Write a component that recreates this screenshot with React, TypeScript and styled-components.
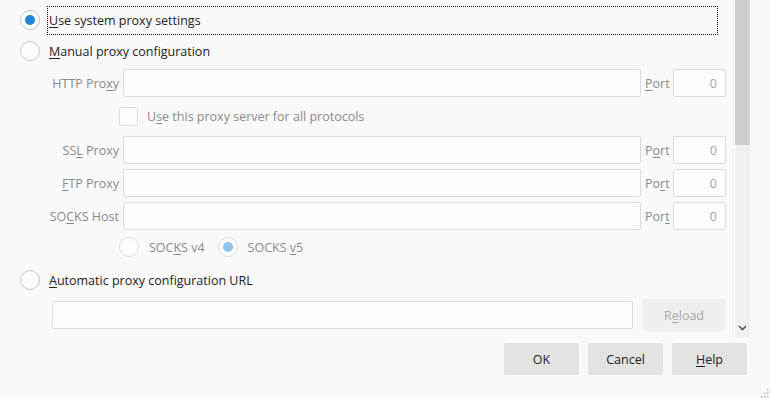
import { Fragment } from "react";
import styled, { createGlobalStyle } from "styled-components";

const GlobalStyle = createGlobalStyle`
  html, body {
    margin: 0;
    padding: 0;
    background: #f9f9f9;
  }
  body {
    font-family: "Open Sans", "Noto Sans", sans-serif;
    font-size: 12.5px;
    color: #222;
  }
`;

const Dialog = styled.div`
  width: 770px;
  height: 399px;
  display: flex;
  flex-direction: column;
  position: relative;
  overflow: hidden;
`;

const ScrollArea = styled.div`
  height: 337px;
  display: flex;
  padding-right: 20px;
`;

const Content = styled.div`
  flex: 1;
  display: flex;
  flex-direction: column;
  padding: 6px 6px 0 20px;
  border-right: 1px solid #f1f1f1;
  margin-right: 2px;
`;

const Scrollbar = styled.div`
  width: 15px;
  display: flex;
  flex-direction: column;
  background: #f0f0f0;
`;

const Thumb = styled.div`
  height: 145px;
  background: #cdcdcd;
  border-right: 2px solid #d6d6d6;
`;

const Track = styled.div`
  flex: 1;
  display: flex;
  align-items: flex-end;
  justify-content: center;
  padding-bottom: 6px;
`;

const RadioRow = styled.label<{ $mt?: number }>`
  display: flex;
  align-items: center;
  height: 28px;
  margin-top: ${(p) => p.$mt ?? 0}px;
  gap: 8px;
  color: #222;
`;

const RadioCircle = styled.span<{ $checked?: boolean; $disabled?: boolean }>`
  width: 20px;
  height: 20px;
  flex: none;
  box-sizing: border-box;
  border-radius: 50%;
  border: 1px solid ${(p) => (p.$disabled ? "#dcdcdc" : "#c4c4c4")};
  background: #fdfdfd;
  display: flex;
  align-items: center;
  justify-content: center;
  &::after {
    content: "";
    display: ${(p) => (p.$checked ? "block" : "none")};
    width: 10px;
    height: 10px;
    border-radius: 50%;
    background: ${(p) => (p.$disabled ? "#8fc3ea" : "#1e88d6")};
  }
`;

const RadioText = styled.span<{ $focus?: boolean }>`
  flex: ${(p) => (p.$focus ? 1 : "none")};
  margin-right: ${(p) => (p.$focus ? 9 : 0)}px;
  height: 27px;
  display: flex;
  align-items: center;
  padding-left: 1px;
  box-sizing: border-box;
  color: #222;
  outline: ${(p) => (p.$focus ? "1px dotted #111" : "none")};
`;

const Key = styled.u`
  text-underline-offset: 2px;
`;

const Grid = styled.div`
  display: grid;
  grid-template-columns: 71px 1fr 24px 53px;
  column-gap: 4px;
  margin: 4px 0 0 28px;
  color: #8a8a8a;
`;

const FieldLabel = styled.span`
  text-align: right;
  align-self: center;
  white-space: nowrap;
`;

const PortLabel = styled.span`
  align-self: center;
  white-space: nowrap;
`;

const Input = styled.div`
  height: 28px;
  box-sizing: border-box;
  border: 1px solid #dadada;
  border-radius: 2px;
  background: #fcfcfc;
  display: flex;
  align-items: center;
  justify-content: flex-end;
  padding-right: 8px;
  color: #a6a6a6;
`;

const FullRow = styled.div<{ $h: number; $mt: number }>`
  grid-column: 1 / -1;
  height: ${(p) => p.$h}px;
  margin-top: ${(p) => p.$mt}px;
  display: flex;
  align-items: center;
  padding-left: 71px;
  gap: 9px;
`;

const Spacer = styled.div`
  grid-column: 1 / -1;
  height: 5px;
`;

const CheckBox = styled.span`
  width: 19px;
  height: 19px;
  box-sizing: border-box;
  border: 1px solid #dcdcdc;
  border-radius: 2px;
  background: #fdfdfd;
  flex: none;
`;

const SocksOption = styled.span`
  display: flex;
  align-items: center;
  gap: 10px;
  margin-right: 4px;
`;

const UrlRow = styled.div`
  display: flex;
  align-items: center;
  gap: 9px;
  margin: 5px 0 0 32px;
  height: 32px;
`;

const UrlInput = styled(Input)`
  flex: 1;
`;

const Button = styled.button<{ $disabled?: boolean }>`
  width: ${(p) => (p.$disabled ? 84 : 75)}px;
  height: 32px;
  border: none;
  border-radius: 2px;
  background: ${(p) => (p.$disabled ? "#efefef" : "#e3e3e3")};
  color: ${(p) => (p.$disabled ? "#a8a8a8" : "#222")};
  font-family: "Open Sans", "Noto Sans", sans-serif;
  font-size: 12.5px;
  padding: 0;
  flex: none;
`;

const Footer = styled.div`
  display: flex;
  justify-content: flex-end;
  gap: 9px;
  padding: 6px 23px 0 0;
`;

const Grip = styled.svg`
  position: absolute;
  right: 1px;
  bottom: 1px;
`;

const Radio = ({
  checked,
  disabled,
}: {
  checked?: boolean;
  disabled?: boolean;
}) => <RadioCircle $checked={checked} $disabled={disabled} />;

const proxies = [
  {
    label: (
      <>
        SS<Key>L</Key> Proxy
      </>
    ),
    port: (
      <>
        P<Key>o</Key>rt
      </>
    ),
  },
  {
    label: (
      <>
        <Key>F</Key>TP Proxy
      </>
    ),
    port: (
      <>
        Po<Key>r</Key>t
      </>
    ),
  },
  {
    label: (
      <>
        SO<Key>C</Key>KS Host
      </>
    ),
    port: (
      <>
        Por<Key>t</Key>
      </>
    ),
  },
];

export default function App() {
  return (
    <>
      <GlobalStyle />
      <Dialog>
        <ScrollArea>
          <Content>
            <RadioRow>
              <Radio checked />
              <RadioText $focus>
                <span>
                  <Key>U</Key>se system proxy settings
                </span>
              </RadioText>
            </RadioRow>
            <RadioRow $mt={3}>
              <Radio />
              <RadioText>
                <span>
                  <Key>M</Key>anual proxy configuration
                </span>
              </RadioText>
            </RadioRow>

            <Grid>
              <FieldLabel>
                HTTP Pro<Key>x</Key>y
              </FieldLabel>
              <Input />
              <PortLabel>
                <Key>P</Key>ort
              </PortLabel>
              <Input>0</Input>
              <FullRow $h={29} $mt={5}>
                <CheckBox />
                <span>
                  U<Key>s</Key>e this proxy server for all protocols
                </span>
              </FullRow>
              {proxies.map((p, i) => (
                <Fragment key={i}>
                  <Spacer />
                  <FieldLabel>{p.label}</FieldLabel>
                  <Input />
                  <PortLabel>{p.port}</PortLabel>
                  <Input>0</Input>
                </Fragment>
              ))}
              <FullRow $h={24} $mt={5}>
                <SocksOption>
                  <Radio disabled />
                  <span>
                    SOC<Key>K</Key>S v4
                  </span>
                </SocksOption>
                <SocksOption>
                  <Radio checked disabled />
                  <span>
                    SOCKS <Key>v</Key>5
                  </span>
                </SocksOption>
              </FullRow>
            </Grid>

            <RadioRow $mt={7}>
              <Radio />
              <RadioText>
                <span>
                  <Key>A</Key>utomatic proxy configuration URL
                </span>
              </RadioText>
            </RadioRow>
            <UrlRow>
              <UrlInput />
              <Button $disabled>
                R<Key>e</Key>load
              </Button>
            </UrlRow>
          </Content>
          <Scrollbar>
            <Thumb />
            <Track>
              <svg width="9" height="6" viewBox="0 0 9 6">
                <path
                  d="M1 1 L4.5 4.5 L8 1"
                  fill="none"
                  stroke="#555"
                  strokeWidth="1.6"
                />
              </svg>
            </Track>
          </Scrollbar>
        </ScrollArea>
        <Footer>
          <Button>OK</Button>
          <Button>Cancel</Button>
          <Button>
            <Key>H</Key>elp
          </Button>
        </Footer>
        <Grip width="8" height="9" viewBox="0 0 8 9">
          <g fill="#b8b8b8">
            <rect x="6" y="0" width="1.5" height="1.5" />
            <rect x="3" y="3.5" width="1.5" height="1.5" />
            <rect x="6" y="3.5" width="1.5" height="1.5" />
            <rect x="0" y="7" width="1.5" height="1.5" />
            <rect x="3" y="7" width="1.5" height="1.5" />
            <rect x="6" y="7" width="1.5" height="1.5" />
          </g>
        </Grip>
      </Dialog>
    </>
  );
}
